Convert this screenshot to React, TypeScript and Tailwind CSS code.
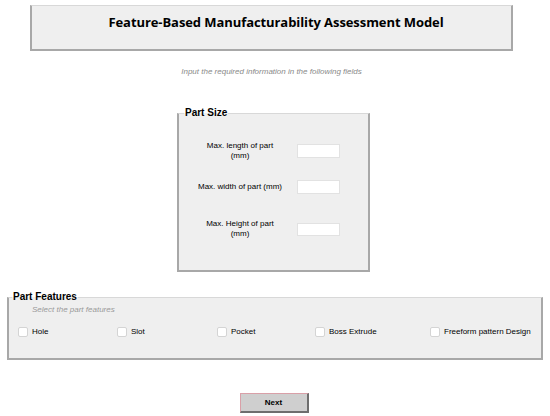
export default function App() {
  const features = [
    { label: "Hole", w: "w-[99px]" },
    { label: "Slot", w: "w-[100px]" },
    { label: "Pocket", w: "w-[98px]" },
    { label: "Boss Extrude", w: "w-[115px]" },
    { label: "Freeform pattern Design", w: "w-[105px]" },
  ];

  return (
    <div className="w-[550px] h-[416px] bg-white overflow-hidden font-['Liberation_Sans',Arial,sans-serif] text-black">
      <div className="w-[543px] flex flex-col items-center">
        {/* title */}
        <div className="mt-[5px] w-[483px] h-[46px] bg-[#efefef] border-t border-t-[#d8d8d8] border-l-2 border-l-[#a8a8a8] border-r-2 border-r-[#a8a8a8] border-b-2 border-b-[#a8a8a8] flex justify-center pt-[8px] pl-[9px]">
          <h1 className="font-['Open_Sans',sans-serif] font-bold text-[13px] leading-[16px] tracking-[-0.08px]">
            Feature-Based Manufacturability Assessment Model
          </h1>
        </div>

        <p className="mt-[16px] text-[8px] italic text-[#8a8a8a] leading-[10px]">
          Input the required information in the following fields
        </p>

        {/* part size */}
        <fieldset className="mt-[30px] ml-[4px] w-[193px] h-[165px] bg-[#efefef] border-t border-t-[#d8d8d8] border-l-2 border-l-[#a8a8a8] border-r-2 border-r-[#a8a8a8] border-b-2 border-b-[#a8a8a8] px-0">
          <legend className="ml-[5px] px-[1px] text-[10px] font-bold leading-[12px]">Part Size</legend>
          <div className="flex flex-col">
            <div className="flex items-center mt-[22px]">
              <div className="w-[110px] ml-[6px] text-center text-[8px] leading-[10px]">
                Max. length of part
                <br />
                (mm)
              </div>
              <input className="ml-[2px] w-[43px] h-[14px] bg-white border border-[#e2e2e2] outline-none" />
            </div>
            <div className="flex items-center mt-[19px]">
              <div className="w-[110px] ml-[6px] text-center text-[8px] leading-[10px]">
                Max. width of part (mm)
              </div>
              <input className="ml-[2px] w-[43px] h-[14px] bg-white border border-[#e2e2e2] outline-none" />
            </div>
            <div className="flex items-center mt-[25px]">
              <div className="w-[110px] ml-[6px] text-center text-[8px] leading-[10px]">
                Max. Height of part
                <br />
                (mm)
              </div>
              <input className="ml-[2px] w-[43px] h-[13px] bg-white border border-[#e2e2e2] outline-none" />
            </div>
          </div>
        </fieldset>

        {/* part features */}
        <fieldset className="mt-[19px] self-start ml-[7px] w-[536px] h-[69px] bg-[#efefef] border-t border-t-[#d8d8d8] border-l-2 border-l-[#a8a8a8] border-r-2 border-r-[#a8a8a8] border-b-2 border-b-[#a8a8a8]">
          <legend className="ml-[3px] px-[1px] text-[10px] font-bold leading-[12px]">Part Features</legend>
          <p className="ml-[23px] mt-[2px] text-[8px] italic text-[#9a9a9a] leading-[10px]">Select the part features</p>
          <div className="flex mt-[12px] ml-[9px]">
            {features.map((f) => (
              <label key={f.label} className={`${f.w} flex items-center gap-[4px] text-[8px] leading-[10px]`}>
                <span className="w-[10px] h-[10px] rounded-[2px] bg-white border border-[#d4d4d4] shrink-0" />
                <span>{f.label}</span>
              </label>
            ))}
          </div>
        </fieldset>

        <button className="mt-[33px] ml-[5px] w-[69px] h-[20px] bg-[#cfcfcf] border-t border-t-[#d9a0a8] border-l border-l-[#d9a0a8] border-r-2 border-r-[#6e6e6e] border-b-2 border-b-[#6e6e6e] text-[8px] font-bold">
          Next
        </button>
      </div>
    </div>
  );
}
